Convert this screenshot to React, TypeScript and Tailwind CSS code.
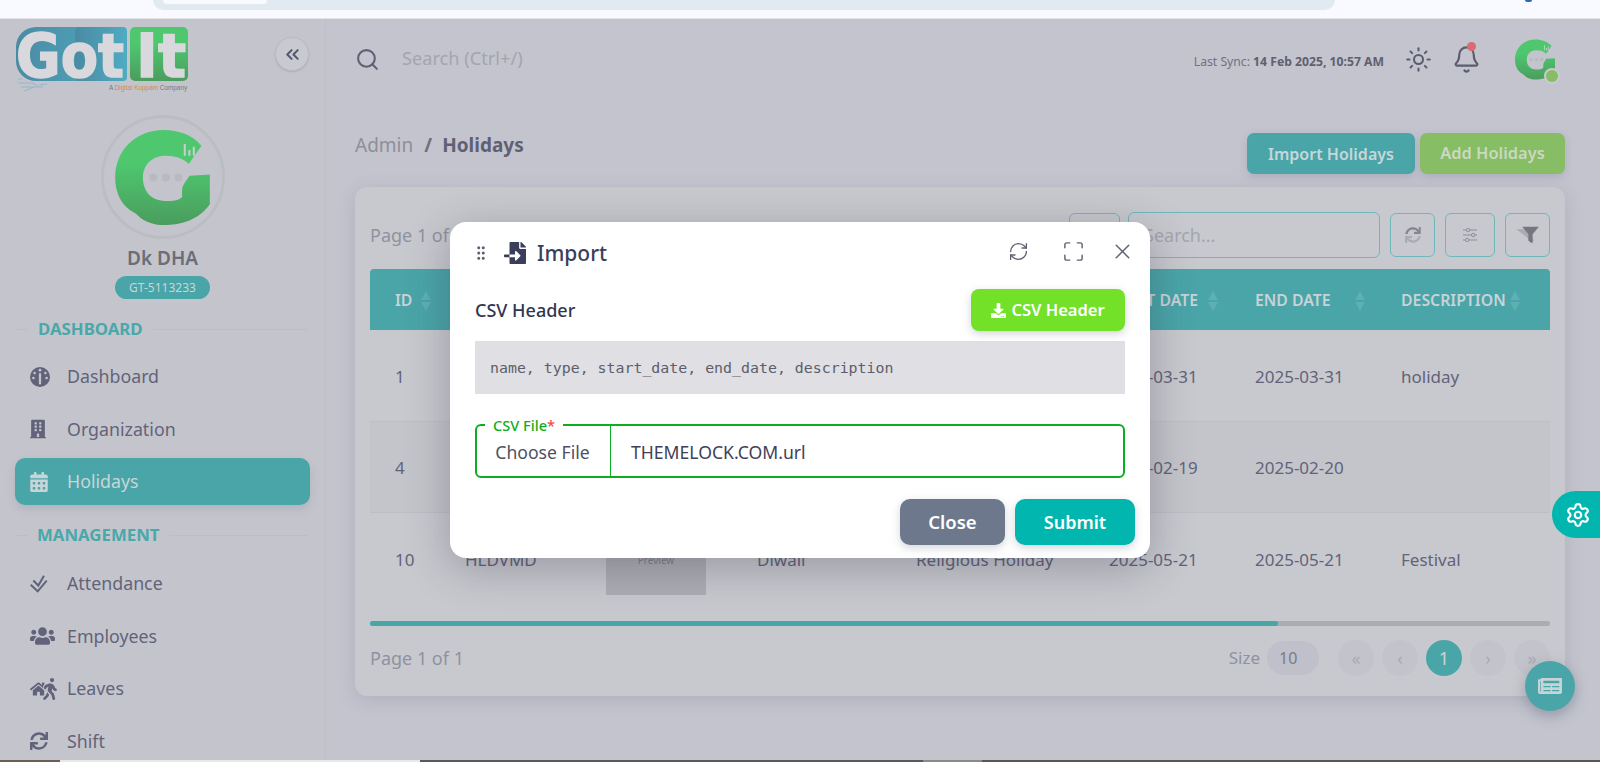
import { Bell, ChevronsLeft, GripVertical, Maximize, RefreshCw, Search, Settings, Sun, X } from "lucide-react";
import { FaBuilding, FaCalendarAlt, FaDownload, FaFileImport, FaHome, FaNewspaper, FaSync, FaUsers, FaWalking } from "react-icons/fa";

function GMark({ className, id }: { className: string; id: string }) {
  return (
    <svg viewBox="0 0 283 284" className={className}>
      <defs>
        <linearGradient id={id} x1="0" y1="0" x2="0" y2="1">
          <stop offset="0.35" stopColor="#4ec76f" />
          <stop offset="1" stopColor="#4a9d5e" />
        </linearGradient>
      </defs>
      <path
        fill={`url(#${id})`}
        d="M258,47 C232,15 190,0 145,0 C60,0 0,62 0,142 C0,190 20,222 45,240 L62,250 L75,262 C95,277 120,284 145,284 C200,284 250,268 283,222 L283,133 L222,137 C214,150 200,165 200,180 L200,200 C190,212 170,212 150,212 C105,212 83,180 83,143 C83,105 110,77 150,77 C180,77 205,85 220,102 Z"
      />
      <circle cx="114" cy="142" r="12" fill="#b9bac0" />
      <circle cx="152" cy="142" r="12" fill="#b9bac0" />
      <circle cx="189" cy="142" r="12" fill="#b9bac0" />
      <path d="M205 42h6v35h-6zM219 60h6v17h-6zM232 50h6v27h-6z" fill="#c9cfd0" />
    </svg>
  );
}

function Logo() {
  return (
    <svg viewBox="0 0 175 66" className="block h-[66px] w-[175px] overflow-visible">
      <defs>
        <linearGradient id="logoBlue" x1="0" x2="1" y1="0" y2="0">
          <stop offset="0" stopColor="#4a8ba3" />
          <stop offset="1" stopColor="#4fabc3" />
        </linearGradient>
        <linearGradient id="logoGreen" x1="0" x2="0" y1="0" y2="1">
          <stop offset="0.3" stopColor="#4ec76f" />
          <stop offset="1" stopColor="#4a9d5e" />
        </linearGradient>
      </defs>
      <rect x="1" y="0" width="111" height="54" rx="20" fill="url(#logoBlue)" />
      <rect x="60" y="0" width="52" height="54" rx="4" fill="url(#logoBlue)" />
      <rect x="115" y="0" width="58" height="54" rx="5" fill="url(#logoGreen)" />
      <text x="1" y="50" fontFamily="'DejaVu Sans', sans-serif" fontWeight="700" fontSize="60" textLength="108" lengthAdjust="spacingAndGlyphs" fill="#d9d9dd" stroke="#d9d9dd" strokeWidth="1.5">Got</text>
      <text x="121" y="50" fontFamily="'DejaVu Sans', sans-serif" fontWeight="700" fontSize="60" textLength="50" lengthAdjust="spacingAndGlyphs" fill="#d9d9dd" stroke="#d9d9dd" strokeWidth="1.5">It</text>
      <text x="94" y="63" fontFamily="'Liberation Sans', sans-serif" fontSize="6.4" fill="#77787f">
        A <tspan fill="#d28b4a">Digital Kuppam</tspan> Company
      </text>
      <path d="M3 56h14l6 3M6 60h22M9 64l10-4M3 52h5M24 58l8-1" stroke="#8fb6c9" strokeWidth="0.9" fill="none" />
    </svg>
  );
}

function GaugeIcon() {
  return (
    <svg viewBox="0 0 20 20" className="h-[20px] w-[20px]">
      <circle cx="10" cy="10" r="10" fill="#62637a" />
      <circle cx="10" cy="3.2" r="1.4" fill="#c4c5cc" />
      <circle cx="4.6" cy="6" r="1.3" fill="#c4c5cc" />
      <circle cx="15.400" cy="6" r="1.3" fill="#c4c5cc" />
      <circle cx="3.4" cy="11" r="1.3" fill="#c4c5cc" />
      <circle cx="16.600" cy="11" r="1.3" fill="#c4c5cc" />
      <path d="M10 7v9.500" stroke="#c4c5cc" strokeWidth="2.2" strokeLinecap="round" />
    </svg>
  );
}

function DoubleCheck() {
  return (
    <svg viewBox="0 0 18 18" className="h-[18px] w-[18px]" fill="none" stroke="#62637a" strokeWidth="2">
      <path d="M3.300 5.500l5 5L14 .7" />
      <path d="M.7 9.700l7 6.600 9-10.600" />
    </svg>
  );
}

function LeaveIcon() {
  return (
    <span className="flex w-[26px] items-center text-[#62637a]">
      <FaHome className="h-[16px] w-[17px] shrink-0" />
      <FaWalking className="-ml-[4px] h-[22px] w-[14px] shrink-0 stroke-[#c4c5cc] [paint-order:stroke] [stroke-width:50]" />
    </span>
  );
}

const dashboardItems = [
  { label: "Dashboard", icon: <GaugeIcon />, active: false },
  { label: "Organization", icon: <FaBuilding className="h-[20px] w-[16px]" />, active: false },
  { label: "Holidays", icon: <FaCalendarAlt className="h-[20px] w-[18px]" />, active: true },
];
const managementItems = [
  { label: "Attendance", icon: <DoubleCheck />, active: false },
  { label: "Employees", icon: <FaUsers className="h-[20px] w-[25px]" />, active: false },
  { label: "Leaves", icon: <LeaveIcon />, active: false },
  { label: "Shift", icon: <FaSync className="h-[18px] w-[18px]" />, active: false },
];

function NavList({ items }: { items: typeof dashboardItems }) {
  return (
    <ul className="flex flex-col gap-[5.5px]">
      {items.map((item) => (
        <li
          key={item.label}
          className={
            item.active
              ? "flex h-[47px] shrink-0 items-center rounded-[10px] bg-[#4aa5a8] pl-[15px] text-[#c8d5d8] shadow-[0_4px_10px_rgba(70,80,100,0.15)]"
              : "flex h-[47px] shrink-0 items-center pl-[15px] text-[#62637a]"
          }
        >
          <span className="flex w-[37px] shrink-0 items-center">{item.icon}</span>
          <span className="text-[17.8px]">{item.label}</span>
        </li>
      ))}
    </ul>
  );
}

function SectionTitle({ children, pad }: { children: string; pad: string }) {
  return (
    <div className="mr-[3px] flex h-[22px] items-center">
      <span className={`h-px bg-[#bcbdc6] ${pad}`} />
      <span className="mx-[10px] text-[16.8px] font-bold text-[#48a8aa]">{children}</span>
      <span className="h-px flex-1 bg-[#bcbdc6]" />
    </div>
  );
}

function Sidebar() {
  return (
    <aside className="flex h-full w-[326px] shrink-0 flex-col overflow-hidden border-r border-[#bfc0c6] bg-[#c4c5cc] pl-[15px] pr-[15px] pt-[8px]">
      <div className="flex h-[66px] items-start justify-between">
        <Logo />
        <button className="mr-[1px] mt-[10px] flex h-[34px] w-[34px] items-center justify-center rounded-full border border-[#bbbcc3] bg-[#c9cad0] text-[#55566c] shadow-[0_1px_2px_rgba(70,70,90,0.2)]">
          <ChevronsLeft className="h-[21px] w-[21px]" strokeWidth={2.3} />
        </button>
      </div>
      <div className="mt-[22px] flex flex-col items-center">
        <div className="flex h-[124px] w-[124px] items-center justify-center rounded-full border-[3px] border-[#bcbdc3]">
          <GMark id="gLarge" className="h-[95px] w-[95px]" />
        </div>
        <div className="mt-[6px] h-[26px] text-[19px] font-semibold leading-[26px] text-[#6c6d76]">Dk DHA</div>
        <div className="mt-[5px] flex h-[23px] w-[95px] items-center justify-center rounded-full bg-[#4aa5a8] text-[12px] text-[#c7d6d8]">GT-5113233</div>
      </div>
      <div className="mt-[19px]">
        <SectionTitle pad="w-[13px]">DASHBOARD</SectionTitle>
      </div>
      <div className="mt-[13px]">
        <NavList items={dashboardItems} />
      </div>
      <div className="mt-[19px]">
        <SectionTitle pad="w-[12px]">MANAGEMENT</SectionTitle>
      </div>
      <div className="mt-[14px]">
        <NavList items={managementItems} />
      </div>
    </aside>
  );
}

function SortArrows({ className }: { className: string }) {
  return (
    <span className={`flex flex-col gap-[2px] ${className}`}>
      <span className="h-0 w-0 border-x-[5.5px] border-b-[9px] border-x-transparent border-b-[#5db0b3]" />
      <span className="h-0 w-0 border-x-[5.5px] border-t-[9px] border-x-transparent border-t-[#5db0b3]" />
    </span>
  );
}

const rowGrid = "grid grid-cols-[95px_141px_151px_159px_193px_146px_146px_149px]";

function Table() {
  return (
    <div className="text-[17px] text-[#62637a]">
      <div className={`${rowGrid} h-[61px] items-center rounded-t-[4px] bg-[#4aa5a8] pt-[2px] text-[15.8px] font-semibold text-[#c8d3d7]`}>
        <div className="flex items-center pl-[25px]">ID<SortArrows className="ml-[9px]" /></div>
        <div />
        <div />
        <div />
        <div />
        <div className="flex items-center whitespace-nowrap">START DATE<SortArrows className="ml-[10px]" /></div>
        <div className="flex items-center whitespace-nowrap">END DATE<SortArrows className="ml-[24px]" /></div>
        <div className="flex items-center whitespace-nowrap">DESCRIPTION<SortArrows className="ml-[4px]" /></div>
      </div>
      <div className={`${rowGrid} h-[92px] items-center border-b border-[#bebfc5] pt-[2px]`}>
        <div className="pl-[25px]">1</div>
        <div />
        <div />
        <div />
        <div />
        <div>2025-03-31</div>
        <div>2025-03-31</div>
        <div>holiday</div>
      </div>
      <div className={`${rowGrid} h-[91px] items-center border-b border-[#bebfc5] bg-[#c4c5ca] pt-[2px]`}>
        <div className="pl-[25px]">4</div>
        <div />
        <div />
        <div />
        <div />
        <div>2025-02-19</div>
        <div>2025-02-20</div>
        <div />
      </div>
      <div className={`${rowGrid} h-[92px] items-center pt-[2px]`}>
        <div className="pl-[25px]">10</div>
        <div>HLDVMD</div>
        <div>
          <div className="flex h-[70px] w-[100px] items-center justify-center bg-[#adaeb4] text-[10px] text-[#7d7e88]">Preview</div>
        </div>
        <div>Diwali</div>
        <div>Religious Holiday</div>
        <div>2025-05-21</div>
        <div>2025-05-21</div>
        <div>Festival</div>
      </div>
      <div className="mt-[16px] h-[5px] rounded-full bg-[#abacb1]">
        <div className="h-full w-[908px] rounded-full bg-[#4aa5a8]" />
      </div>
    </div>
  );
}

function IconBtn({ children, className }: { children?: React.ReactNode; className: string }) {
  return <button className={`flex h-[44px] items-center justify-center rounded-[6px] border border-[#6fb8ba] text-[#9d9ea8] ${className}`}>{children}</button>;
}

function DuoFilter() {
  return (
    <svg viewBox="0 0 30 24" className="h-[20px] w-[26px]">
      <path d="M1 5h14l7 14-4 3-4-7z" fill="#a9aab2" />
      <path d="M8 2h20l-7.500 9v11l-5-3v-8z" fill="#75767f" />
    </svg>
  );
}

function DuoSync() {
  return (
    <span className="relative flex h-[16px] w-[16px]">
      <FaSync className="h-[16px] w-[16px] text-[#aaabb3]" />
      <FaSync className="absolute left-0 top-0 h-[16px] w-[16px] text-[#85868f] [clip-path:inset(0_0_50%_0)]" />
    </span>
  );
}

function Tuner() {
  return (
    <svg viewBox="0 0 16 14" className="h-[14px] w-[16px]" fill="none" stroke="#8d8e98" strokeWidth="1">
      <path d="M1 2h3.500M8 2h7M1 7h8.500M13 7h2M1 12h2.500M7 12h8" />
      <circle cx="6.200" cy="2" r="1.700" />
      <circle cx="11.200" cy="7" r="1.700" />
      <circle cx="5.200" cy="12" r="1.700" />
    </svg>
  );
}

function Card() {
  return (
    <section className="mt-[13px] h-[509px] rounded-[12px] bg-[#c8c9ce] px-[15px] pt-[25px] shadow-[0_4px_18px_rgba(90,90,110,0.18)]">
      <div className="flex h-[46px] items-center">
        <span className="w-[699px] text-[18px] text-[#9091a0]">Page 1 of 1</span>
        <IconBtn className="w-[51px]" />
        <div className="ml-[8px] flex h-[46px] w-[252px] items-center rounded-[6px] border border-[#6fb8ba] pl-[15px] text-[18px] text-[#a4a5ae]">Search...</div>
        <IconBtn className="ml-[10px] w-[45px]">
          <DuoSync />
        </IconBtn>
        <IconBtn className="ml-[10px] w-[50px]">
          <Tuner />
        </IconBtn>
        <IconBtn className="ml-[10px] w-[45px]">
          <DuoFilter />
        </IconBtn>
      </div>
      <div className="mt-[11px]">
        <Table />
      </div>
      <div className="mt-[14px] flex h-[36px] items-center">
        <span className="text-[18px] text-[#9091a0]">Page 1 of 1</span>
        <span className="ml-auto text-[17px] text-[#9091a0]">Size</span>
        <span className="ml-[7px] flex h-[34px] w-[52px] items-center rounded-full bg-[#bfc0c9] pl-[12px] text-[16px] text-[#7a7b88]">10</span>
        <div className="ml-[19px] flex gap-[8px] text-[18px] text-[#a9aab2]">
          <span className="flex h-[36px] w-[36px] items-center justify-center rounded-full bg-[#c3c4cb]">«</span>
          <span className="flex h-[36px] w-[36px] items-center justify-center rounded-full bg-[#c3c4cb]">‹</span>
          <span className="flex h-[36px] w-[36px] items-center justify-center rounded-full bg-[#4aa5a8] text-[#c8d5d8]">1</span>
          <span className="flex h-[36px] w-[36px] items-center justify-center rounded-full bg-[#c3c4cb]">›</span>
          <span className="flex h-[36px] w-[36px] items-center justify-center rounded-full bg-[#c3c4cb]">»</span>
        </div>
      </div>
    </section>
  );
}

function Content() {
  return (
    <main className="flex h-full min-w-0 flex-1 flex-col bg-[#c3c4ce] pl-[29px] pr-[35px]">
      <header className="flex h-[80px] shrink-0 items-center pr-[10px]">
        <Search className="h-[25px] w-[25px] text-[#5f6074]" strokeWidth={2} />
        <span className="ml-[22px] text-[18.2px] text-[#a4a5ae]">Search (Ctrl+/)</span>
        <span className="ml-auto mt-[6px] whitespace-nowrap text-[12.2px] text-[#71727e]">
          Last Sync: <b className="font-bold text-[#5f6070]">14 Feb 2025, 10:57 AM</b>
        </span>
        <Sun className="ml-[21px] h-[27px] w-[27px] text-[#5b5c70]" strokeWidth={1.8} />
        <span className="relative ml-[20px] flex">
          <Bell className="h-[29px] w-[29px] text-[#5b5c70]" strokeWidth={1.8} />
          <span className="absolute -top-[3px] right-[5px] h-[9px] w-[9px] rounded-full bg-[#d96c72]" />
        </span>
        <span className="relative ml-[34px] flex">
          <GMark id="gSmall" className="h-[41px] w-[40px]" />
          <span className="absolute -bottom-[2px] -right-[3px] h-[12px] w-[12px] rounded-full bg-[#86bd65] ring-2 ring-[#c9cad0]" />
        </span>
      </header>
      <div className="mt-[34px] flex h-[41px] shrink-0 items-start">
        <div className="flex items-center text-[19px] leading-[24px]">
          <span className="text-[#8e8f99]">Admin</span>
          <span className="ml-[11px] font-bold text-[#6f7080]">/</span>
          <span className="ml-[10px] font-bold text-[#5f6074]">Holidays</span>
        </div>
        <button className="ml-auto h-[41px] w-[168px] rounded-[7px] bg-[#4aa5a8] text-[16px] font-semibold text-[#c6d7d9] shadow-[0_3px_8px_rgba(80,90,110,0.2)]">Import Holidays</button>
        <button className="ml-[5px] h-[41px] w-[145px] rounded-[7px] bg-[#86bd65] text-[16.4px] font-semibold text-[#cbd9bf] shadow-[0_3px_8px_rgba(80,90,110,0.2)]">Add Holidays</button>
      </div>
      <Card />
    </main>
  );
}

function ImportModal() {
  return (
    <div className="absolute left-[450px] top-[222px] h-[336px] w-[700px] rounded-[16px] bg-white pl-[25px] pr-[15px] shadow-[0_10px_44px_rgba(40,40,60,0.3)]">
      <div className="flex h-[62px] items-center text-[#3b3e5a]">
        <GripVertical className="-ml-[3px] h-[18px] w-[18px] text-[#5c5e72]" strokeWidth={2} />
        <FaFileImport className="ml-[13px] h-[22px] w-[24px]" />
        <span className="ml-[10px] text-[21px] font-medium leading-none">Import</span>
        <div className="mb-[3px] ml-auto flex items-center text-[#5f6272]">
          <RefreshCw className="h-[21px] w-[21px]" strokeWidth={1.5} />
          <Maximize className="ml-[33px] h-[23px] w-[23px]" strokeWidth={1.5} />
          <X className="ml-[25px] h-[25px] w-[25px]" strokeWidth={1.4} />
        </div>
      </div>
      <div className="mr-[10px] mt-[5px] flex h-[42px] items-center justify-between">
        <span className="text-[18px] font-medium text-[#33364f]">CSV Header</span>
        <button className="flex h-[42px] w-[154px] items-center justify-center gap-[5px] rounded-[8px] bg-[#72e128] text-[16.5px] font-semibold text-white shadow-[0_3px_8px_rgba(80,90,110,0.25)]">
          <FaDownload className="h-[15px] w-[15px]" />
          CSV Header
        </button>
      </div>
      <div className="mr-[10px] mt-[10px] flex h-[53px] items-center bg-[#dfdfe4] pl-[15px] pt-[1px] font-['DejaVu_Sans_Mono',monospace] text-[14.9px] text-[#5d5e6b]">
        name, type, start_date, end_date, description
      </div>
      <div className="relative mr-[10px] mt-[30px] flex h-[54px] items-stretch rounded-[6px] border-2 border-[#0cae20] text-[17.6px] text-[#4e5063]">
        <span className="absolute -top-[11px] left-[8px] bg-white px-[8px] text-[14.6px] font-medium leading-[20px] text-[#0cae20]">
          CSV File<span className="text-[#f04b4b]">*</span>
        </span>
        <span className="flex w-[134px] items-center justify-center border-r border-[#0cae20] pr-[2px] pt-[2px]">Choose File</span>
        <span className="flex items-center pl-[20px] pt-[2px] text-[#3f4156]">THEMELOCK.COM.url</span>
      </div>
      <div className="mt-[21px] flex justify-end gap-[10px]">
        <button className="h-[46px] w-[105px] rounded-[10px] bg-[#6d788d] text-[18.5px] font-semibold text-white shadow-[0_3px_8px_rgba(80,90,110,0.25)]">Close</button>
        <button className="h-[46px] w-[120px] rounded-[10px] bg-[#00b6ae] text-[18px] font-semibold text-white shadow-[0_3px_8px_rgba(80,90,110,0.25)]">Submit</button>
      </div>
    </div>
  );
}

export default function App() {
  return (
    <div className="relative flex h-[762px] w-[1600px] flex-col overflow-hidden bg-[#f8faff] font-['Noto_Sans',sans-serif]">
      <div className="flex h-[19px] shrink-0 items-start border-b border-[#dfe1e6] pl-[153px]">
        <div className="h-[10px] w-[1182px] rounded-b-[16px] bg-[#e2eaf1] pl-[10px]">
          <div className="h-[4px] w-[104px] rounded-b-[8px] bg-[#f8faff]" />
        </div>
        <div className="ml-[190px] h-[2px] w-[7px] rounded-b-full bg-[#2a6cb0]" />
      </div>
      <div className="flex h-[741px] shrink-0">
        <Sidebar />
        <Content />
      </div>
      <div className="flex h-[2px] shrink-0">
        <span className="w-[60px] bg-[#6a5f55]" />
        <span className="w-[360px] bg-[#e8e8e8]" />
        <span className="w-[503px] bg-[#555a60]" />
        <span className="w-[59px] bg-[#8b8b85]" />
        <span className="flex-1 bg-[#5c5650]" />
      </div>
      <ImportModal />
      <button className="absolute left-[1552px] top-[491px] flex h-[47px] w-[48px] items-center justify-center rounded-l-full bg-[#00b6ae] pl-[4px] text-white">
        <Settings className="h-[26px] w-[26px]" strokeWidth={2} />
      </button>
      <button className="absolute left-[1525px] top-[661px] flex h-[50px] w-[50px] items-center justify-center rounded-full bg-[#4aa5a8] text-[#c6d3d7] shadow-[0_5px_14px_rgba(70,80,100,0.35)]">
        <FaNewspaper className="h-[24px] w-[24px]" />
      </button>
    </div>
  );
}
